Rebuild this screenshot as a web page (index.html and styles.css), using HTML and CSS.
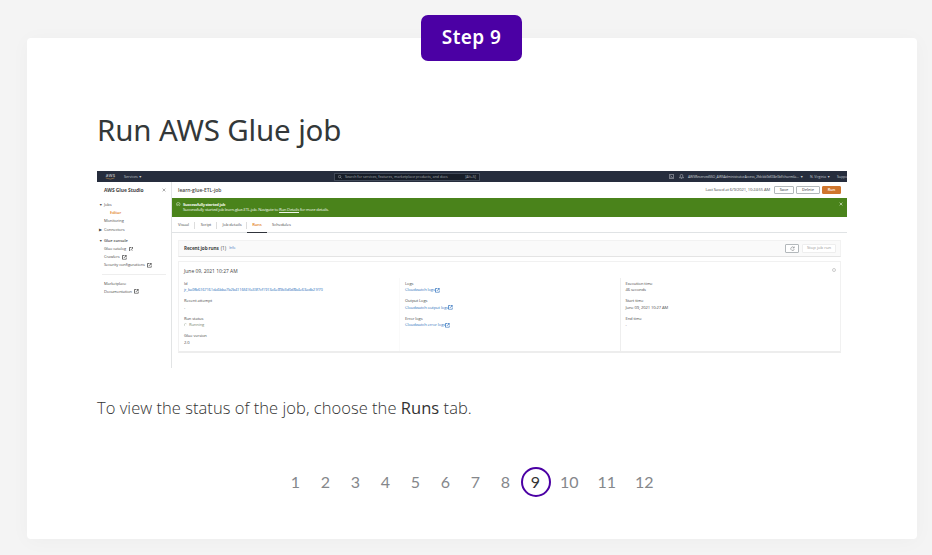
FILE: index.html
```html
<!DOCTYPE html>
<html lang="en">
<head>
<meta charset="utf-8">
<title>Run AWS Glue job</title>
<link rel="stylesheet" href="styles.css">
</head>
<body>
<svg class="defs" aria-hidden="true">
  <symbol id="ext" viewBox="0 0 10 10"><path d="M5 1H1v8h8V5M4 6l5-5M6 1h3v3" fill="none" stroke="currentColor" stroke-width="1.600"/></symbol>
  <symbol id="close" viewBox="0 0 10 10"><path d="M1.500 1.500l7 7M8.500 1.500l-7 7" stroke="currentColor" stroke-width="1.500"/></symbol>
</svg>
<main class="card">
  <div class="badge">Step 9</div>
  <h1>Run AWS Glue job</h1>

  <div class="console">
    <div class="topbar">
      <svg class="aws" viewBox="0 0 30 18"><text x="2" y="11" font-size="13" textLength="25" fill="#ddd">aws</text><path d="M2 13q13 6 24 0" stroke="#c98d45" stroke-width="1.500" fill="none"/></svg>
      <span class="services">Services ▼</span>
      <div class="search">
        <svg class="glass" viewBox="0 0 10 10"><circle cx="4" cy="4" r="3"/><path d="M6 6l3 3"/></svg>
        <span class="query">Search for services, features, marketplace products, and docs</span>
        <span class="keys">[Alt+S]</span>
      </div>
      <svg class="tool" viewBox="0 0 12 12"><path d="M1 1h10v10H1zM3.500 4l2.500 2-2.500 2M6 8.500h3"/></svg>
      <svg class="tool bell" viewBox="0 0 12 12"><path d="M1 9h10L9 7V4a3 3 0 0 0-6 0v3zM5 11h2"/></svg>
      <span class="account">AWSReservedSSO_AWSAdministratorAccess_2fdcbb9df28e0bf/charmila...&nbsp; ▼</span>
      <span class="region">N. Virginia ▼</span>
      <span class="support">Support</span>
    </div>
    <div class="work">
      <nav class="side">
        <div class="brand"><span class="brand-name">AWS Glue Studio</span><svg class="x"><use href="#close"/></svg></div>
        <div class="group">
          <div class="item caret"><i>▼</i>Jobs</div>
          <div class="item editor">Editor</div>
          <div class="item monitoring">Monitoring</div>
          <div class="item caret connectors"><i>▶</i>Connectors</div>
        </div>
        <div class="group second">
          <div class="item caret glue"><i>▼</i>Glue console</div>
          <div class="item catalog"><span>Glue catalog</span><svg class="ext"><use href="#ext"/></svg></div>
          <div class="item crawlers"><span>Crawlers</span><svg class="ext"><use href="#ext"/></svg></div>
          <div class="item security"><span>Security configurations</span><svg class="ext"><use href="#ext"/></svg></div>
        </div>
        <div class="group third">
          <div class="item market">Marketplace</div>
          <div class="item docs"><span>Documentation</span><svg class="ext"><use href="#ext"/></svg></div>
        </div>
      </nav>
      <section class="main">
        <div class="jobhead">
          <span class="jobname">learn-glue-ETL-job</span>
          <span class="saved">Last Saved at 6/9/2021, 10:24:55 AM</span>
          <span class="btn">Save</span><span class="btn delete">Delete</span><span class="btn run">Run</span>
        </div>
        <div class="flash">
          <svg class="ok" viewBox="0 0 10 10"><circle cx="5" cy="5" r="4"/><path d="M3 5l1.500 1.500L7 3.500"/></svg>
          <div class="message"><b>Successfully started job</b><span>Successfully started job learn-glue-ETL-job. Navigate to <u>Run Details</u> for more details.</span></div>
          <svg class="x"><use href="#close"/></svg>
        </div>
        <div class="tabs"><span class="t1">Visual</span><span class="t2">Script</span><span class="t3">Job details</span><span class="t4">Runs</span><span class="t5">Schedules</span></div>
        <div class="recent">
          <b>Recent job runs</b><span class="count">(1)</span><span class="info">Info</span>
          <span class="btn refresh"><svg viewBox="0 0 10 10"><path d="M8 3.500A3.500 3.500 0 1 0 8.500 6M8.500 1v3h-3"/></svg></span><span class="btn stop">Stop job run</span>
        </div>
        <div class="runcard">
          <div class="runtitle"><span>June 09, 2021 10:27 AM</span><i class="ring"></i></div>
          <div class="details">
            <dl>
              <dt>Id</dt><dd class="link id">jr_ba9fb6167161da6bba7b2b4116f41fa33f7cf1913a6e89b3d0d8b4e63adb21f70</dd>
              <dt>Recent attempt</dt><dd>-</dd>
              <dt>Run status</dt><dd class="running"><svg class="spin" viewBox="0 0 10 10"><path d="M2 8A4 4 0 0 1 7 1.500"/></svg>Running</dd>
              <dt>Glue version</dt><dd>2.0</dd>
            </dl>
            <dl>
              <dt>Logs</dt><dd class="link">Cloudwatch logs<svg class="ext"><use href="#ext"/></svg></dd>
              <dt>Output Logs</dt><dd class="link">Cloudwatch output logs<svg class="ext"><use href="#ext"/></svg></dd>
              <dt>Error logs</dt><dd class="link">Cloudwatch error logs<svg class="ext"><use href="#ext"/></svg></dd>
            </dl>
            <dl>
              <dt>Execution time</dt><dd>46 seconds</dd>
              <dt>Start time</dt><dd>June 09, 2021 10:27 AM</dd>
              <dt>End time</dt><dd>-</dd>
            </dl>
          </div>
        </div>
      </section>
    </div>
  </div>

  <p class="copy">To view the status of the job, choose the <strong>Runs</strong> tab.</p>
  <nav class="pages">
    <a>1</a><a>2</a><a>3</a><a>4</a><a>5</a><a>6</a><a>7</a><a>8</a><a class="current">9</a><a class="wide">10</a><a class="wide">11</a><a class="wide">12</a>
  </nav>
</main>
</body>
</html>
```
FILE: styles.css
```css
* { box-sizing: border-box; }
body { margin: 0; height: 555px; overflow: hidden; background: #f4f4f4; font-family: "Noto Sans", sans-serif; color: #333; }
.defs { position: absolute; width: 0; height: 0; }
.card { position: relative; width: 890px; height: 501px; margin: 38px 0 0 27px; padding: 72px 70px 0; background: #fff; border-radius: 4px; box-shadow: 0 2px 20px rgba(0,0,0,.03); }
.badge { position: absolute; left: 394px; top: -23px; width: 101px; height: 46px; border-radius: 7px; background: #4b00a4; color: #fff; font: 600 19px/44px "Noto Sans", sans-serif; letter-spacing: .4px; text-align: center; }
h1 { margin: 0; height: 61px; font-size: 29.500px; line-height: 40px; font-weight: 400; letter-spacing: -.15px; color: #333839; white-space: nowrap; }
.copy { margin: 27px 0 0; height: 26px; font: 300 16.500px/26px "Open Sans", sans-serif; letter-spacing: .04px; color: #333; white-space: nowrap; }
.copy strong { font-weight: 500; }
.pages { display: flex; margin: 46px 0 0 183.500px; font: 16px/29px Lato, sans-serif; color: #85878b; }
.pages a { width: 30px; height: 30px; text-align: center; }
.pages .wide { width: 37.500px; }
.pages .current { border: 2px solid #4b00a4; border-radius: 50%; line-height: 25px; color: #333; }

.console { width: 750px; height: 197px; overflow: hidden; background: #fff; font: 4px/6px "Open Sans", sans-serif; color: #4c4c4c; white-space: nowrap; }
.console span, .console svg { flex: none; }
.console svg { fill: none; stroke: currentColor; }
.topbar { display: flex; align-items: center; height: 11px; padding-left: 8px; background: #262d3d; color: #c5c8ce; font-size: 3.600px; }
.topbar .aws { width: 11px; height: 7px; stroke: none; }
.services { margin-left: 8px; width: 210px; }
.search { display: flex; align-items: center; flex: none; width: 146px; height: 8px; padding: 0 3px; border: 1px solid #414958; background: #171d28; color: #a4a8ae; }
.glass { width: 4px; height: 4px; margin-right: 3px; stroke-width: 1.300; }
.keys { margin-left: auto; }
.tool { width: 5px; height: 5px; margin-left: 189px; stroke-width: 1.300; }
.bell { margin-left: 5px; }
.account { margin-left: 4px; width: 122px; font-size: 3.500px; letter-spacing: -.13px; }
.region { width: 27px; font-size: 3.400px; }
.work { display: grid; grid-template-columns: 75px 1fr; height: 186px; }
.side { border-right: 1px solid #e2e4e5; padding: 0 5px 0 0; letter-spacing: -.08px; }
.brand { display: flex; align-items: center; justify-content: space-between; height: 16px; padding-left: 7px; color: #444; font-size: 4.900px; font-weight: 700; letter-spacing: -.05px; }
.brand .x { width: 4px; height: 4px; color: #777; }
.group { padding: 3px 0 0 7px; }
.item { display: flex; align-items: center; height: 8.200px; gap: 2.500px; }
.caret { margin-left: -5px; gap: 2px; }
.caret i { width: 3px; font-size: 3.600px; font-style: normal; }
.editor { padding-left: 6px; color: #e27a21; font-weight: 600; }
.glue { font-weight: 600; }
.ext { width: 4.800px; height: 4.800px; }
.side .ext { color: #444; }
.third { margin: 4px 0 0 5px; padding: 5px 0 0 2px; border-top: 1px solid #eee; }
.jobhead { display: flex; align-items: center; height: 15.500px; padding: 0 6px; }
.jobname { font-size: 5px; font-weight: 600; color: #444; }
.saved { margin-left: auto; margin-right: 4px; font-size: 4.100px; letter-spacing: -.12px; }
.btn { display: flex; align-items: center; justify-content: center; width: 20px; height: 8px; border: 1px solid #b3b8bb; border-radius: 1px; font-size: 3.900px; font-weight: 600; color: #686d70; background: #fff; }
.delete { width: 24px; margin: 0 2px; }
.run { width: 19px; border-color: #cf762d; background: #cf762d; color: #fff; }
.flash { display: flex; height: 19.500px; padding: 4px 4px 0; background: #4a831b; color: #eef5e8; }
.ok { width: 4.500px; height: 4.500px; margin-right: 2.500px; }
.message { display: flex; flex: 1; flex-direction: column; font-size: 4.200px; line-height: 5.500px; font-weight: 500; letter-spacing: -.2px; }
.message b { font-weight: 700; letter-spacing: -.3px; }
.flash .x { width: 4px; height: 4px; }
.tabs { display: flex; height: 16px; border-bottom: 1px solid #e0e3e5; font-size: 4.100px; line-height: 16px; font-weight: 500; letter-spacing: -.05px; }
.tabs span { height: 16px; text-align: center; background: linear-gradient(#ddd,#ddd) right center / 1px 7px no-repeat; }
.t1 { width: 23px; } .t2 { width: 22px; } .t3 { width: 30px; }
.tabs .t4 { width: 20px; color: #e27a21; font-weight: 600; border-bottom: 1px solid #30343b; background: none; }
.tabs .t5 { width: 29px; background: none; }
.recent { display: flex; align-items: center; width: 663px; height: 17px; margin: 6.500px 0 0 6px; padding: 0 4px 0 5px; background: #fafafa; border: 1px solid #f2f2f2; border-bottom-color: #e4e4e4; font-size: 4.700px; color: #444; }
.recent b { letter-spacing: -.12px; }
.count { margin: 0 3px 0 2px; }
.info { font-size: 3.400px; color: #3475bd; }
.refresh { width: 14px; height: 9px; margin: 0 3px 0 auto; }
.refresh svg { width: 5px; height: 5px; }
.stop { width: 34px; height: 9px; border-color: #eee; color: #999; font-weight: 400; font-size: 4.200px; }
.runcard { width: 663px; height: 92px; margin: 4.500px 0 0 6px; border: 1px solid #f1f1f1; border-bottom: 2px solid #ededed; padding: 5.500px 4px 0 5px; }
.runtitle { display: flex; justify-content: space-between; height: 10px; font-size: 4.950px; color: #444; line-height: 7px; }
.ring { width: 4px; height: 4px; border: 1px solid #ccc; border-radius: 50%; }
.details { display: grid; grid-template-columns: 215px 221px 1fr; height: 70px; letter-spacing: -.09px; }
dl { margin: 0; padding-top: 3px; }
dl + dl { padding-left: 5px; border-left: 1px solid #fafafa; }
dl + dl + dl { padding-left: 4.500px; border-left-color: #eee; }
dt, dd { display: flex; align-items: center; margin: 0; height: 6.500px; font-size: 4.100px; }
dd { margin-bottom: 4.500px; }
dd.link { color: #3475bd; }
dd.id { letter-spacing: -.2px; }
.running { color: #798772; }
.spin { width: 3.500px; height: 4px; margin-right: 1.500px; }
```
